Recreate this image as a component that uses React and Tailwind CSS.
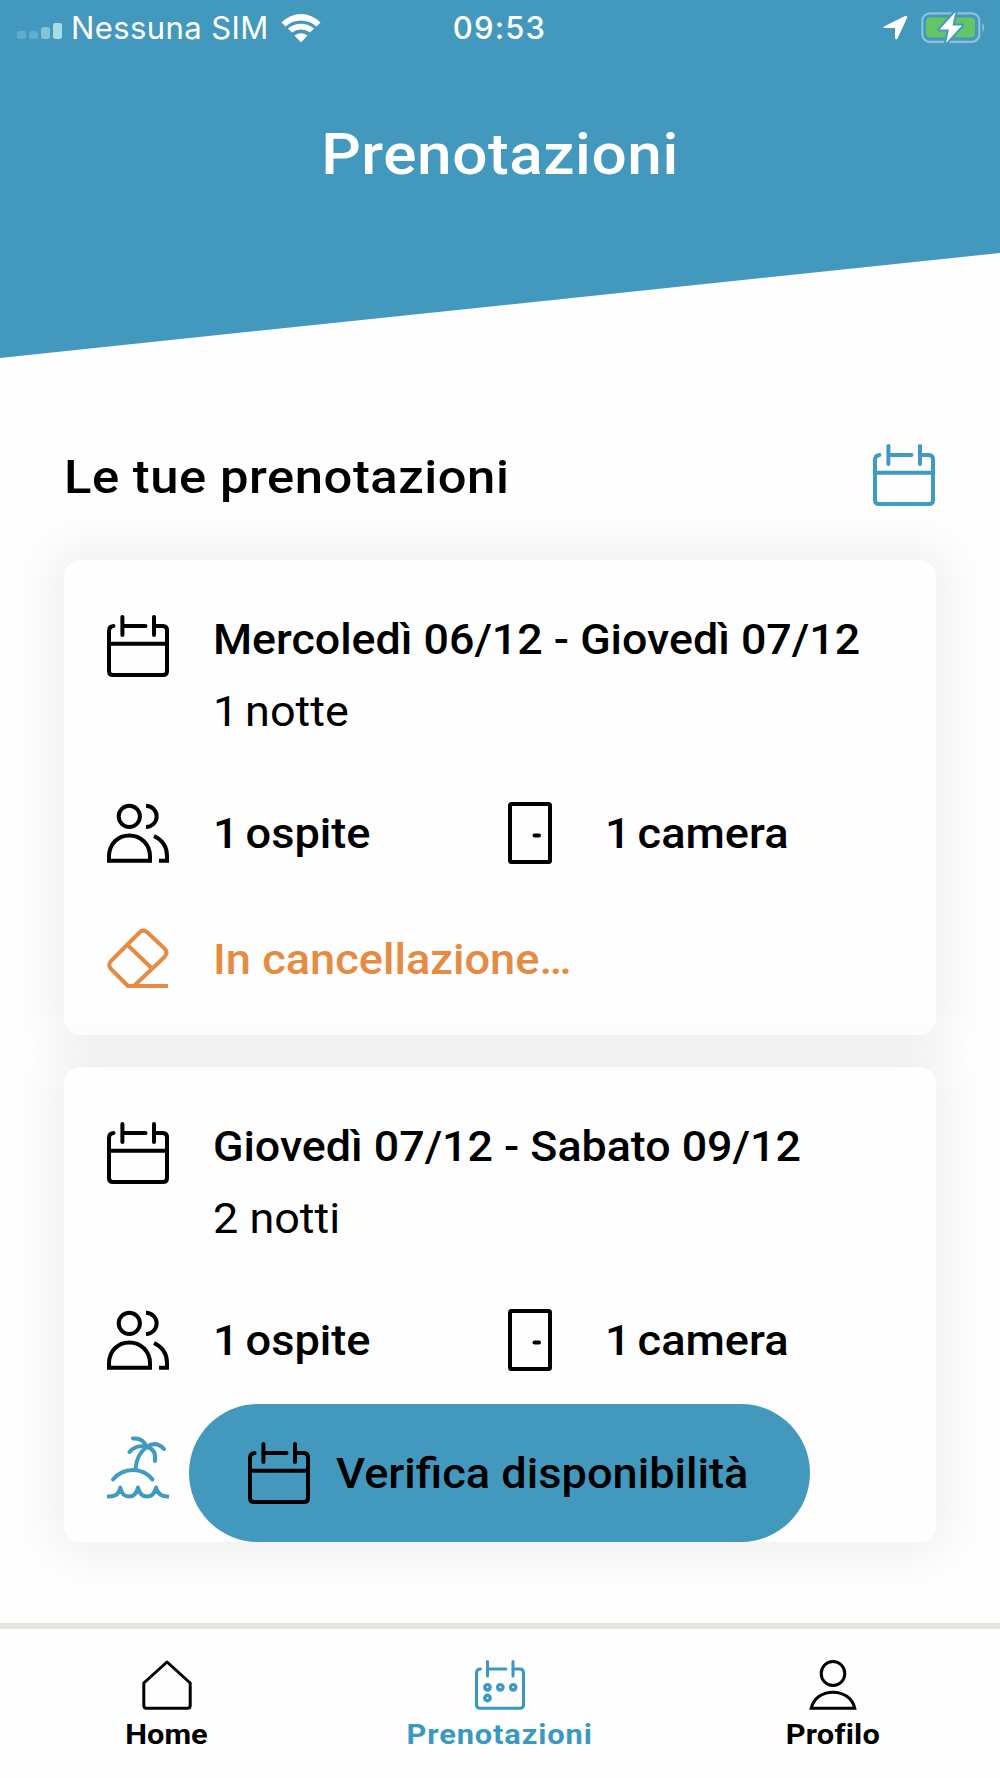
import { clsx } from 'clsx';

const bookings = [
  {
    id: 1,
    dates: 'Mercoledì 06/12 - Giovedì 07/12',
    nights: '1 notte',
    nightsClass: '[word-spacing:-4px]',
    guests: '1 ospite',
    rooms: '1 camera',
    status: 'cancelling',
  },
  {
    id: 2,
    dates: 'Giovedì 07/12 - Sabato 09/12',
    nights: '2 notti',
    guests: '1 ospite',
    rooms: '1 camera',
    status: 'booked',
  },
];

function Icon({ w, h, stroke = 4, className, children }) {
  return (
    <svg
      width={w}
      height={h}
      viewBox={`0 0 ${w} ${h}`}
      fill="none"
      stroke="currentColor"
      strokeWidth={stroke}
      strokeLinecap="round"
      strokeLinejoin="round"
      className={clsx('shrink-0', className)}
    >
      {children}
    </svg>
  );
}

const CalendarIcon = ({ className }) => (
  <Icon w={62} h={62} className={className}>
    <path d="M6.5 11Q2 11.5 2 16V56Q2 60 6 60H56Q60 60 60 56V15.5Q60 11 56 11H47" />
    <path d="M15.4 2V20M47 2V20M15.4 11H38.5M2 28.8H60" />
  </Icon>
);

const GuestsIcon = () => (
  <Icon w={62} h={60}>
    <circle cx="22.3" cy="13.3" r="10.6" />
    <path d="M39 2.7A10.6 10.6 0 0 1 39 24" strokeLinecap="butt" />
    <path d="M2 57.7V53.5C2 41 11 32.4 22.3 32.4S43 41 43 53.5V57.7Z" strokeLinejoin="miter" />
    <path d="M47 33C55.5 37 60 44.5 60 53V57.7H52" strokeLinecap="butt" strokeLinejoin="miter" />
  </Icon>
);

const DoorIcon = () => (
  <Icon w={44} h={62}>
    <rect x="2" y="2" width="40" height="58" rx="1.5" />
    <path d="M26.5 33.5H31" />
  </Icon>
);

const EraserIcon = () => (
  <Icon w={62} h={60}>
    <path d="M20.5 57.5L4 41Q0.5 37 4 33L32.5 4.5Q36.500 0.8 40.5 4.5L57.5 20.5Q61.5 24.5 57.5 29L28.5 56.5" />
    <path d="M20.5 17L44 39.5" />
    <path d="M20 58H61" strokeLinecap="butt" />
  </Icon>
);

const PalmIcon = () => (
  <Icon w={62} h={63}>
    <path d="M28.6 32Q30 18 39.7 11" />
    <path d="M26 2.5Q36 1.5 39.7 11Q29 8 22.5 16" />
    <path d="M39.7 11Q49 4.5 57 13" />
    <path d="M39.7 11Q49.5 13 48 25" />
    <path d="M6 43.5Q14 34 26 34T45.5 43.5" />
    <path d="M1 60.5Q12 61 13.3 51.5Q15 60.5 22 60.5T31 51.5Q33 60.5 40 60.5T49 51.5Q51 60.5 61 60.5" />
  </Icon>
);

const HomeIcon = () => (
  <Icon w={50} h={50} stroke={3}>
    <path d="M1.8 23L25 2L48.2 23V45.5Q48.2 48.2 45.5 48.2H4.5Q1.8 48.2 1.8 45.5Z" />
  </Icon>
);

const NavCalendarIcon = () => (
  <Icon w={50} h={50} stroke={3}>
    <path d="M5.5 9Q1.5 9 1.5 13V45Q1.5 48.3 5 48.3H45Q48.5 48.3 48.5 45V13Q48.5 9 45 9H38" />
    <path d="M12.5 1.5V16M38 1.5V16M12.5 9H31" />
    <g strokeWidth="3.4">
      <circle cx="12.5" cy="27.3" r="2.7" />
      <circle cx="25.3" cy="27.3" r="2.7" />
      <circle cx="38.2" cy="27.3" r="2.7" />
      <circle cx="12.5" cy="38" r="2.7" />
    </g>
  </Icon>
);

const ProfileIcon = () => (
  <Icon w={48} h={50} stroke={3}>
    <ellipse cx="24" cy="13.5" rx="11.8" ry="12" />
    <path d="M2.200 48.3C4.5 38.5 13 32.2 24 32.2S43.5 38.5 45.8 48.3Z" strokeLinejoin="miter" />
  </Icon>
);

function StatusBar() {
  return (
    <div className="flex h-[56px] items-center justify-between pl-[17px] pr-[14px] font-[Inter,sans-serif] text-white">
      <div className="flex w-[420px] items-center">
        <svg width="46" height="18" viewBox="0 0 46 18" className="mt-[6px] shrink-0 fill-[#c8f4f0]">
          <rect x="0" y="9" width="9" height="8" rx="2.5" opacity="0.22" />
          <rect x="12" y="9" width="9" height="8" rx="2.5" opacity="0.22" />
          <rect x="24" y="5" width="9" height="12" rx="2.5" opacity="0.48" />
          <rect x="36" y="1" width="9" height="16" rx="2.5" opacity="0.75" />
        </svg>
        <span className="ml-[8px] text-[31px] leading-[56px] tracking-[0.4px]">Nessuna SIM</span>
        <svg width="40" height="30" viewBox="0 0 40 30" className="-mt-[1px] ml-[12px] shrink-0 fill-white">
          <path d="M0.5 9.5Q9 1 20 1T39.5 9.5L35.5 13.5Q29 7.5 20 7.5T4.5 13.5Z" />
          <path d="M7 15.5Q12.5 10.8 20 10.8T33 15.5L29 19.5Q25 16.6 20 16.6T11 19.5Z" />
          <path d="M13.5 22.5Q20 18 26.5 22.5L20 29.5Z" />
        </svg>
      </div>
      <span className="-ml-[4px] text-[31px] font-medium leading-[56px] tracking-[1.2px]">09:53</span>
      <div className="-mt-[2px] flex w-[420px] items-center justify-end gap-[13px]">
        <svg width="25" height="25" viewBox="0 0 25 25" className="fill-white">
          <path d="M1 11.5L22 1Q25 0 24 3L14.5 23.5Q13 25.5 12 23V13.5Q12 13 11.5 13H2Q-1 12.5 1 11.5Z" />
        </svg>
        <svg width="65" height="33" viewBox="0 0 65 33">
          <rect x="1.3" y="2.3" width="57" height="28.5" rx="7.5" fill="none" stroke="#fff" strokeOpacity="0.4" strokeWidth="2.2" />
          <path d="M61.5 11.5Q64.5 16.5 61.5 21.5Z" fill="#fff" fillOpacity="0.45" />
          <rect x="5" y="6.5" width="49" height="20" rx="4" fill="#65c566" />
          <path
            d="M34.5 1L18.5 18.5H28L25 32L41 14.5H31.5Z"
            fill="#fff"
            stroke="#4398be"
            strokeWidth="4"
            strokeLinejoin="round"
            paintOrder="stroke"
          />
        </svg>
      </div>
    </div>
  );
}

function BookingStatus({ status }) {
  if (status === 'cancelling') {
    return (
      <div className="mt-[64px] flex h-[62px] gap-[44px] text-[#e58b43]">
        <EraserIcon />
        <span className="mt-[2px] origin-left scale-x-[1.075] self-center font-medium leading-[50px]">
          In cancellazione…
        </span>
      </div>
    );
  }
  return (
    <div className="mt-[65px] flex h-[62px] text-[#3f9bc1]">
      <PalmIcon />
    </div>
  );
}

function BookingCard({ booking }) {
  return (
    <article className="h-[475px] rounded-2xl bg-[#fefefe] pl-[43px] pt-[55px] text-[42px] leading-[50px] shadow-[0_0_50px_12px_rgba(0,20,20,0.062)]">
      <div className="flex gap-[44px]">
        <CalendarIcon />
        <div className="whitespace-nowrap">
          <h3 className="origin-left scale-x-[1.065] font-medium">{booking.dates}</h3>
          <p className={clsx('mt-[22px] origin-left scale-x-[1.07]', booking.nightsClass)}>{booking.nights}</p>
        </div>
      </div>
      <div className="mt-[65px] flex h-[62px] items-center font-medium [word-spacing:-4px]">
        <div className="flex w-[401px] items-center gap-[44px]">
          <GuestsIcon />
          <span className="mt-[2px] origin-left scale-x-[1.075]">{booking.guests}</span>
        </div>
        <div className="flex items-center gap-[53px]">
          <DoorIcon />
          <span className="mt-[2px] origin-left scale-x-[1.075]">{booking.rooms}</span>
        </div>
      </div>
      <BookingStatus status={booking.status} />
    </article>
  );
}

function NavItem({ icon, label, active, className }) {
  return (
    <button className={clsx('flex flex-1 flex-col items-center', active ? 'text-[#3a99c0]' : 'text-black')}>
      {icon}
      <span className={clsx('mt-[9px] scale-x-110 text-[28px] font-bold leading-8', className)}>{label}</span>
    </button>
  );
}

export default function App() {
  return (
    <div className="relative flex h-[1778px] w-[1000px] flex-col overflow-hidden bg-[#fefefe] font-[Roboto,sans-serif] text-black">
      <header className="h-[358px] shrink-0 bg-[#4398be] [clip-path:polygon(0_0,100%_0,100%_253px,0_100%)]">
        <StatusBar />
        <h1 className="mt-[66px] scale-x-[1.09] text-center text-[57px] font-medium leading-[66px] tracking-[0.5px] text-white">
          Prenotazioni
        </h1>
      </header>

      <main className="flex-1 px-16">
        <div className="mt-[86px] flex h-[62px] items-center justify-between">
          <h2 className="mt-[4px] origin-left scale-x-[1.08] text-[47px] font-medium leading-[56px] tracking-[0.5px]">
            Le tue prenotazioni
          </h2>
          <CalendarIcon className="mr-[1px] text-[#3f9bc1]" />
        </div>
        <div className="mt-[54px] flex flex-col gap-8">
          {bookings.map((booking) => (
            <BookingCard key={booking.id} booking={booking} />
          ))}
        </div>
      </main>

      {/* Floating action */}
      <button className="absolute bottom-[236px] left-[189px] flex h-[138px] w-[621px] items-center rounded-full bg-[#4398be] pl-[59px]">
        <CalendarIcon />
        <span className="ml-[26px] mt-[2px] origin-left scale-x-[1.075] whitespace-nowrap text-[42px] font-medium leading-[50px]">
          Verifica disponibilità
        </span>
      </button>

      <nav className="flex h-[155px] shrink-0 border-t-[6px] border-[#e6e6e0] pt-[31px]">
        <NavItem icon={<HomeIcon />} label="Home" />
        <NavItem icon={<NavCalendarIcon />} label="Prenotazioni" active className="tracking-[0.8px]" />
        <NavItem icon={<ProfileIcon />} label="Profilo" className="tracking-[0.2px]" />
      </nav>
    </div>
  );
}
